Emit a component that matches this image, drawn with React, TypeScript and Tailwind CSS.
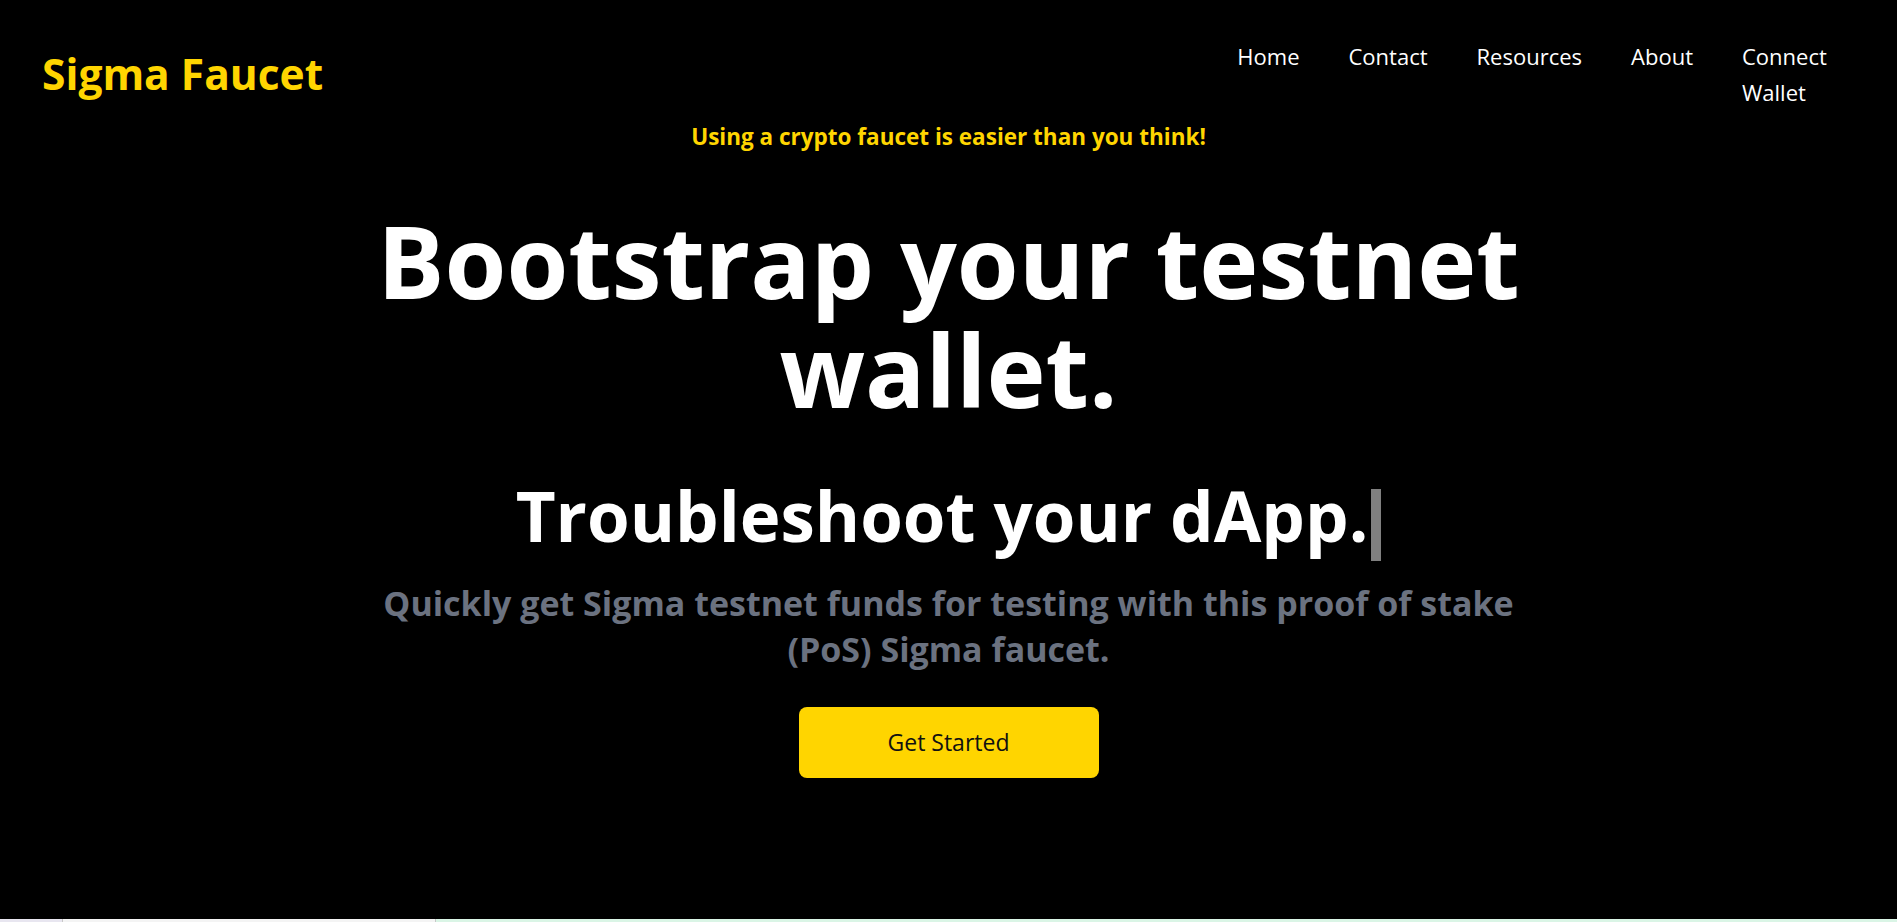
import React from 'react';

const font = { fontFamily: '"Segoe UI", "Open Sans", "Noto Sans", sans-serif' };

const navItems = ['Home', 'Contact', 'Resources', 'About'];

function Header() {
  return (
    <header className="flex items-start justify-between px-[42px] pt-[38px]">
      <a href="#" className="mt-[10px] text-[42.5px] font-bold leading-[1.2] text-[#ffd500]">
        Sigma Faucet
      </a>
      <nav>
        <ul className="flex items-start gap-[49px] text-[22px] leading-[36px] text-white">
          {navItems.map((item) => (
            <li key={item}>
              <a href="#">{item}</a>
            </li>
          ))}
          <li className="w-[113px]">
            <a href="#">Connect Wallet</a>
          </li>
        </ul>
      </nav>
    </header>
  );
}

function Hero() {
  return (
    <section className="flex flex-col items-center text-center">
      <p className="mt-[12px] text-[22.5px] font-bold leading-[30px] text-[#ffd500]">
        Using a crypto faucet is easier than you think!
      </p>
      <h1 className="mt-[54px] w-[1200px] text-[100px] font-bold leading-[109px] text-white">
        Bootstrap your testnet wallet.
      </h1>
      <h2 className="mt-[49px] text-[69px] font-bold leading-[84px] text-white">
        Troubleshoot your dApp.
        <span className="ml-[3px] inline-block h-[72px] w-[10px] bg-[#808080] align-[-19px]" />
      </h2>
      <p className="mt-[19px] w-[1180px] text-[34px] font-bold leading-[46px] text-[#6b7280]">
        Quickly get Sigma testnet funds for testing with this proof of stake (PoS) Sigma faucet.
      </p>
      <button className="mt-[35px] h-[71px] w-[300px] rounded-lg bg-[#ffd500] text-[23px] text-[#111]">
        Get Started
      </button>
    </section>
  );
}

export default function App() {
  return (
    <div className="flex h-screen flex-col bg-black" style={font}>
      <div className="flex-1 overflow-hidden">
        <Header />
        <Hero />
      </div>
      <div className="flex h-[3px]">
        <div className="w-[62px] bg-[#e8e6f0]" />
        <div className="w-[374px] border-x border-[#c8c8c8] bg-[#f4f4f4]" />
        <div className="flex-1 bg-[#daf5e6]" />
      </div>
    </div>
  );
}
